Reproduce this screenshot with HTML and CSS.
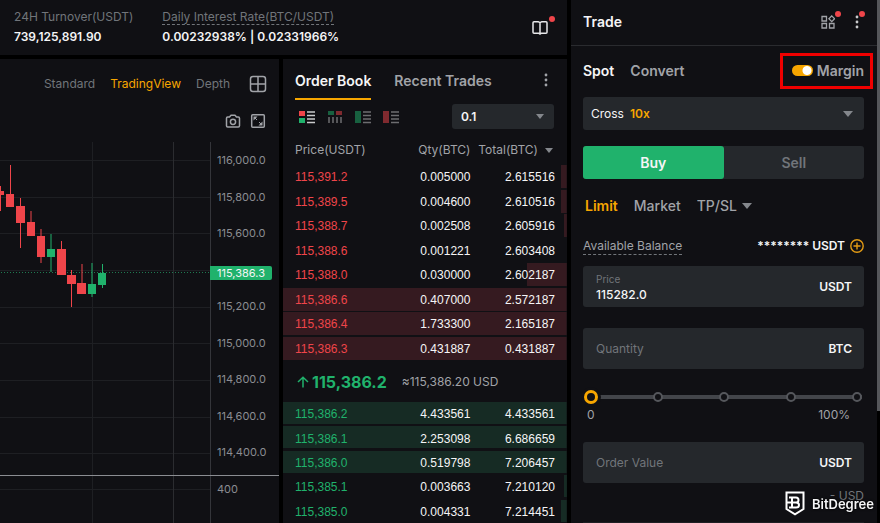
FILE: index.html
```
<!DOCTYPE html>
<html lang="en">
<head>
    <meta charset="UTF-8">
    <meta name="viewport" content="width=device-width, initial-scale=1.0">
    <title>BTC/USDT Spot Trading</title>
    <link rel="stylesheet" href="styles.css">
</head>
<body>
    <div class="app">
        <main class="market">
            <header class="ticker">
                <dl class="stat">
                    <dt>24H Turnover(USDT)</dt>
                    <dd>739,125,891.90</dd>
                </dl>
                <dl class="stat">
                    <dt><span class="hint">Daily Interest Rate(BTC/USDT)</span></dt>
                    <dd>0.00232938% | 0.02331966%</dd>
                </dl>
                <button class="icon-btn guide" aria-label="Guide">
                    <svg width="18" height="16" viewBox="0 0 18 16" fill="none" stroke="#e8e8ea" stroke-width="1.5" stroke-linejoin="round"><path d="M3 1.800H7.500L9 2.600L10.500 1.800H15Q16 1.800 16 2.800V12.200Q16 13.200 15 13.200H10.500L9 14L7.500 13.200H3Q2 13.200 2 12.200V2.800Q2 1.800 3 1.800ZM9 2.600V14"/></svg>
                    <span class="dot"></span>
                </button>
            </header>

            <section class="panel chart">
                <nav class="chart-tabs">
                    <a href="#standard">Standard</a>
                    <a href="#tradingview" class="active">TradingView</a>
                    <a href="#depth">Depth</a>
                    <button class="icon-btn" aria-label="Layout">
                        <svg width="18" height="18" viewBox="0 0 18 18" fill="none" stroke="#a1a3a8" stroke-width="1.5"><rect x="1.500" y="1.500" width="15" height="15" rx="2.500"/><path d="M9 1.500v15M1.500 9h15"/></svg>
                    </button>
                </nav>
                <div class="chart-tools">
                    <button class="icon-btn" aria-label="Take a snapshot">
                        <svg width="16" height="16" viewBox="0 0 16 16" fill="none" stroke="#a1a3a8" stroke-width="1.5" stroke-linejoin="round"><path d="M2.700 4H4.500L6 2.200H10L11.500 4H13.300Q14.500 4 14.500 5.200V12.800Q14.500 14 13.300 14H2.700Q1.500 14 1.500 12.800V5.200Q1.500 4 2.700 4Z"/><circle cx="8" cy="8.800" r="2.600"/></svg>
                    </button>
                    <button class="icon-btn" aria-label="Full screen">
                        <svg width="16" height="16" viewBox="0 0 16 16" fill="none" stroke="#a1a3a8" stroke-width="1.5"><rect x="1.700" y="1.700" width="12.600" height="12.600" rx="1"/><path d="M3.500 3.500H7.500L3.500 7.500ZM12.500 12.500V8.500L8.500 12.500Z" fill="#a1a3a8" stroke="none"/><path d="M5 5l2 2M11 11l-2-2" stroke-width="1"/></svg>
                    </button>
                </div>
                <div class="plot">
                    <div class="plot-area">
                        <svg class="candles" width="210" height="400" viewBox="0 0 210 400" aria-label="Price chart">
                            <g stroke="#1e1f23">
                                <path d="M-2000 18.500H210M-2000 55.500H210M-2000 91.500H210M-2000 128.500H210M-2000 165.500H210M-2000 201.500H210M-2000 238.500H210M-2000 275.500H210M-2000 311.500H210M-2000 347.500H210M92.500 0V400"/>
                                <path d="M173.500 0V400" stroke="#2b2c30"/>
                            </g>
                            <path d="M-2000 130.500H210" stroke="#1f7a51" stroke-dasharray="1 2"/>
                            <g stroke="#ef454a">
                                <path d="M.5 44V69M10.500 23V58M20.500 56V106M31 69V88M41 87V121M61.500 99V128M71.500 128V165M82 122V144"/>
                            </g>
                            <g fill="#ef454a">
                                <path d="M-4 49h8v4h-8zM6 52h8v13H6zM16 64h9v17h-9zM27 80h8v14h-8zM37 94h8v21h-8zM57 107h9v26h-9zM67 133h9v9h-9zM77 141h9v11h-9z"/>
                            </g>
                            <path d="M51 92V130M92 121V155M102.500 122V146" stroke="#20b26c"/>
                            <path d="M47 107h8v8h-8zM88 142h8v10h-8zM98 131h8v12h-8z" fill="#20b26c"/>
                        </svg>
                    </div>
                    <div class="axis">
                        <ol class="axis-labels">
                            <li>116,000.0</li>
                            <li>115,800.0</li>
                            <li>115,600.0</li>
                            <li></li>
                            <li>115,200.0</li>
                            <li>115,000.0</li>
                            <li>114,800.0</li>
                            <li>114,600.0</li>
                            <li>114,400.0</li>
                            <li>400</li>
                        </ol>
                        <span class="last-price" style="top: 36%">115,386.3</span>
                    </div>
                    <hr class="pane-split">
                </div>
            </section>

            <section class="panel book">
                <nav class="book-tabs">
                    <a href="#book" class="active">Order Book</a>
                    <a href="#trades">Recent Trades</a>
                    <button class="icon-btn" aria-label="More">
                        <svg width="4" height="16" viewBox="0 0 4 16" fill="#a1a3a8"><circle cx="2" cy="3" r="1.400"/><circle cx="2" cy="8" r="1.400"/><circle cx="2" cy="13" r="1.400"/></svg>
                    </button>
                </nav>
                <div class="book-tools">
                    <button class="icon-btn" aria-label="Bids and asks">
                        <svg width="16" height="14" viewBox="0 0 16 14"><path d="M0 1h6v5H0z" fill="#ef454a"/><path d="M0 8h6v5H0z" fill="#20b26c"/><path d="M8 2h8M8 5.500h8M8 9h8M8 12.500h8" stroke="#c9cacc" stroke-width="1.300"/></svg>
                    </button>
                    <button class="icon-btn faded" aria-label="Depth columns">
                        <svg width="16" height="14" viewBox="0 0 16 14"><path d="M1 1h6v4H1z" fill="#20b26c"/><path d="M9 1h6v4H9z" fill="#ef454a"/><path d="M2 7v6M6 7v6M10 7v6M14 7v6" stroke="#c9cacc" stroke-width="1.500"/></svg>
                    </button>
                    <button class="icon-btn faded" aria-label="Bids only">
                        <svg width="16" height="14" viewBox="0 0 16 14"><path d="M0 1h6v12H0z" fill="#20b26c"/><path d="M8 2h8M8 5.500h8M8 9h8M8 12.500h8" stroke="#c9cacc" stroke-width="1.300"/></svg>
                    </button>
                    <button class="icon-btn faded" aria-label="Asks only">
                        <svg width="16" height="14" viewBox="0 0 16 14"><path d="M0 1h6v12H0z" fill="#ef454a"/><path d="M8 2h8M8 5.500h8M8 9h8M8 12.500h8" stroke="#c9cacc" stroke-width="1.300"/></svg>
                    </button>
                    <div class="select precision">
                        <select aria-label="Price precision">
                            <option>0.1</option>
                            <option>1</option>
                            <option>10</option>
                        </select>
                    </div>
                </div>
                <table class="orders asks">
                    <thead>
                        <tr><th>Price(USDT)</th><th>Qty(BTC)</th><th class="sort">Total(BTC)</th></tr>
                    </thead>
                    <tbody>
                        <tr style="--depth: 2%"><td>115,391.2</td><td>0.005000</td><td>2.615516</td></tr>
                        <tr style="--depth: 2%"><td>115,389.5</td><td>0.004600</td><td>2.610516</td></tr>
                        <tr style="--depth: 1%"><td>115,388.7</td><td>0.002508</td><td>2.605916</td></tr>
                        <tr style="--depth: 0%"><td>115,388.6</td><td>0.001221</td><td>2.603408</td></tr>
                        <tr style="--depth: 14%"><td>115,388.0</td><td>0.030000</td><td>2.602187</td></tr>
                        <tr style="--depth: 100%"><td>115,386.6</td><td>0.407000</td><td>2.572187</td></tr>
                        <tr style="--depth: 100%"><td>115,386.4</td><td>1.733300</td><td>2.165187</td></tr>
                        <tr style="--depth: 100%"><td>115,386.3</td><td>0.431887</td><td>0.431887</td></tr>
                    </tbody>
                </table>
                <div class="spread">
                    <svg width="12" height="12" viewBox="0 0 12 12" fill="none" stroke="#20b26c" stroke-width="1.500"><path d="M6 11.500V1.500M1 6L6 1.200L11 6"/></svg>
                    <strong>115,386.2</strong>
                    <span>≈115,386.20 USD</span>
                </div>
                <table class="orders bids">
                    <tbody>
                        <tr style="--depth: 100%"><td>115,386.2</td><td>4.433561</td><td>4.433561</td></tr>
                        <tr style="--depth: 100%"><td>115,386.1</td><td>2.253098</td><td>6.686659</td></tr>
                        <tr style="--depth: 100%"><td>115,386.0</td><td>0.519798</td><td>7.206457</td></tr>
                        <tr style="--depth: 1%"><td>115,385.1</td><td>0.003663</td><td>7.210120</td></tr>
                        <tr style="--depth: 2%"><td>115,385.0</td><td>0.004331</td><td>7.214451</td></tr>
                    </tbody>
                </table>
            </section>
        </main>

        <aside class="panel trade">
            <header class="trade-head">
                <h2>Trade</h2>
                <button class="icon-btn" aria-label="Widgets">
                    <svg width="14" height="14" viewBox="0 0 14 14" fill="none" stroke="#a1a3a8" stroke-width="1.300"><path d="M1 1.500h4.500V6H1zM1 8.500h4.500V13H1zM8.500 8.500H13V13H8.500zM10.750 .9L13.600 3.750L10.750 6.600L7.900 3.750Z"/></svg>
                    <span class="dot"></span>
                </button>
                <button class="icon-btn" aria-label="Settings">
                    <svg width="4" height="14" viewBox="0 0 4 14" fill="#c9cacc"><circle cx="2" cy="2" r="1.400"/><circle cx="2" cy="7" r="1.400"/><circle cx="2" cy="12" r="1.400"/></svg>
                    <span class="dot"></span>
                </button>
            </header>

            <form class="ticket">
                <div class="mode">
                    <a href="#spot" class="active">Spot</a>
                    <a href="#convert">Convert</a>
                    <label class="margin-switch">
                        <input type="checkbox" checked>
                        Margin
                    </label>
                </div>

                <div class="select leverage">
                    <label for="leverage">Cross</label>
                    <select id="leverage">
                        <option>10x</option>
                        <option>5x</option>
                        <option>3x</option>
                    </select>
                </div>

                <div class="side">
                    <button type="button" class="buy">Buy</button>
                    <button type="button" class="sell">Sell</button>
                </div>

                <div class="order-type">
                    <a href="#limit" class="active">Limit</a>
                    <a href="#market">Market</a>
                    <div class="select">
                        <select aria-label="Conditional order">
                            <option>TP/SL</option>
                        </select>
                    </div>
                </div>

                <div class="balance">
                    <span class="hint">Available Balance</span>
                    <strong>******** USDT</strong>
                    <button type="button" class="icon-btn" aria-label="Deposit">
                        <svg width="14" height="14" viewBox="0 0 14 14" fill="none" stroke="#e39b15" stroke-width="1.400"><circle cx="7" cy="7" r="6.200"/><path d="M7 3.500v7M3.500 7h7"/></svg>
                    </button>
                </div>

                <div class="field">
                    <div class="entry">
                        <label for="price">Price</label>
                        <input type="text" id="price" value="115282.0">
                    </div>
                    <span class="unit">USDT</span>
                </div>
                <div class="field">
                    <input type="text" aria-label="Quantity" placeholder="Quantity">
                    <span class="unit">BTC</span>
                </div>

                <div class="slider">
                    <div class="track">
                        <div class="stops"><i></i><i></i><i></i><i></i><i></i></div>
                        <input type="range" min="0" max="100" value="0" aria-label="Percent of balance">
                    </div>
                    <div class="scale"><span>0</span><span>100%</span></div>
                </div>

                <div class="field">
                    <input type="text" aria-label="Order Value" placeholder="Order Value">
                    <span class="unit">USDT</span>
                </div>
                <p class="estimate">- USD</p>
                <hr>
            </form>
        </aside>
        <div class="scrollbar"></div>
    </div>

    <div class="watermark">
        <svg width="20" height="25" viewBox="0 0 20 25" fill="none" stroke="#fff" stroke-width="2"><path d="M1.500 1.500H18.500V18L10 23.300L1.500 18Z"/><path d="M1.500 11.500H13M7 6.500H11Q13.500 6.500 13.500 9T11 11.500Q14 11.500 14 14T11 16.500H7ZM4 6.500H7M4 16.500H7"/></svg>
        <span>BitDegree</span>
    </div>
</body>
</html>
```
FILE: styles.css
```
* {
    margin: 0;
    padding: 0;
    box-sizing: border-box;
}

:root {
    --panel: #101014;
    --field: #25282c;
    --text: #f5f5f6;
    --muted: #a1a3a8;
    --dim: #71757a;
    --accent: #f7a600;
    --green: #20b26c;
    --red: #ef454a;
}

body {
    font-family: Inter, "Liberation Sans", sans-serif;
    font-size: 12px;
    line-height: 16px;
    color: var(--text);
    background: #000;
    overflow: hidden;
}

a {
    color: inherit;
    text-decoration: none;
}

button, input, select {
    font: inherit;
    color: inherit;
    background: none;
    border: none;
    outline: none;
}

.app {
    display: grid;
    grid-template-columns: minmax(0, 1fr) 306px 3px;
    height: 100vh;
}

.panel {
    background: var(--panel);
    min-width: 0;
    overflow: hidden;
}

.market {
    display: grid;
    grid-template-columns: minmax(0, 1fr) 284px;
    grid-template-rows: 55px minmax(0, 1fr);
    gap: 4px;
    margin-right: 4px;
}

.icon-btn {
    display: inline-flex;
    position: relative;
    cursor: pointer;
}

.dot {
    position: absolute;
    top: -4px;
    right: -6px;
    width: 6px;
    height: 6px;
    border-radius: 50%;
    background: var(--red);
}

.hint {
    border-bottom: 1px dashed var(--dim);
}

/* ticker */
.ticker {
    grid-column: 1 / -1;
    display: flex;
    align-items: center;
    gap: 29px;
    padding: 0 18px 0 14px;
    background: var(--panel);
}

.stat dt {
    color: var(--dim);
    line-height: 18px;
}

.stat dd {
    font-weight: 600;
    line-height: 22px;
}

.guide {
    margin-left: auto;
}

/* chart */
.chart {
    display: flex;
    flex-direction: column;
}

.chart-tabs {
    display: flex;
    align-items: center;
    justify-content: flex-end;
    gap: 15px;
    height: 48px;
    padding: 2px 12px 0 0;
    color: var(--dim);
}

.chart-tabs .active {
    color: var(--accent);
}

.chart-tabs .icon-btn {
    margin-left: 4px;
}

.chart-tools {
    display: flex;
    justify-content: flex-end;
    gap: 9px;
    padding: 6px 13px 13px;
}

.plot {
    flex: 1;
    display: flex;
    position: relative;
    min-height: 0;
}

.plot-area {
    flex: 1;
    display: flex;
    justify-content: flex-end;
    overflow: hidden;
}

.candles {
    flex: none;
    overflow: visible;
}

.axis {
    position: relative;
    width: 69px;
    height: 365px;
}

.axis::before {
    content: "";
    position: absolute;
    top: 0;
    left: 0;
    height: 100vh;
    border-left: 1px solid #34353a;
}

.axis-labels {
    display: grid;
    grid-auto-rows: 1fr;
    align-items: center;
    height: 100%;
    padding-left: 7px;
    list-style: none;
    font-size: 11px;
    color: #8b8d92;
}

.last-price {
    position: absolute;
    left: 0;
    padding: 0 7px;
    transform: translateY(-50%);
    font-size: 11px;
    line-height: 14px;
    background: var(--green);
    border-radius: 0 2px 2px 0;
}

.pane-split {
    position: absolute;
    top: 333px;
    width: 100%;
    border: none;
    border-top: 1px solid #8b8d92;
}

/* order book */
.book-tabs {
    display: flex;
    align-items: center;
    gap: 23px;
    padding: 0 19px 0 12px;
    font-size: 14px;
    font-weight: 600;
    color: var(--muted);
}

.book-tabs a {
    line-height: 35px;
    padding-top: 4px;
    border-bottom: 2px solid transparent;
}

.book-tabs .active {
    color: var(--text);
    border-color: var(--accent);
}

.book-tabs .icon-btn {
    margin-left: auto;
}

.book-tools {
    display: flex;
    align-items: center;
    gap: 12px;
    padding: 4px 13px 0 16px;
}

.faded {
    opacity: 0.5;
}

.select {
    display: flex;
    align-items: center;
    position: relative;
}

.select select {
    flex: 1;
    appearance: none;
    padding-right: 18px;
    cursor: pointer;
}

.select::after {
    content: "";
    position: absolute;
    right: 11px;
    border: 5px solid transparent;
    border-top: 6px solid #84878c;
    border-bottom: none;
    pointer-events: none;
}

.precision {
    width: 102px;
    height: 25px;
    margin-left: auto;
    padding: 0 9px;
    font-weight: 600;
    background: var(--field);
    border-radius: 3px;
}

.precision::after {
    right: 10px;
    border-width: 5px 4px 0;
}

.orders {
    width: 100%;
    border-collapse: collapse;
    table-layout: fixed;
    font-family: "Liberation Sans", Arial, sans-serif;
}

.asks {
    height: 232px;
}

.bids {
    height: 122px;
}

.orders th {
    height: 36px;
    padding-top: 6px;
    font-family: Inter, sans-serif;
    font-weight: 400;
    text-align: right;
    color: var(--muted);
}

.orders th:first-child,
.orders td:first-child {
    width: 42%;
    padding-left: 12px;
    text-align: left;
}

.orders th:nth-child(2),
.orders td:nth-child(2) {
    width: 24%;
}

.orders td {
    text-align: right;
}

.orders td:last-child {
    padding-right: 12px;
}

.orders .sort {
    padding-right: 14px;
}

.sort::after {
    content: "";
    display: inline-block;
    margin: 0 0 1px 7px;
    border: 4px solid transparent;
    border-top: 5px solid #84878c;
    border-bottom: none;
}

.orders tbody tr {
    background: linear-gradient(var(--bar), var(--bar)) right top / var(--depth) calc(100% - 2px) no-repeat;
}

.asks {
    --bar: #351a20;
}

.asks td:first-child {
    color: var(--red);
}

.bids {
    --bar: #162b24;
}

.bids td:first-child {
    color: var(--green);
}

.spread {
    display: flex;
    align-items: center;
    gap: 3px;
    height: 41px;
    padding-left: 14px;
}

.spread strong {
    font-size: 16px;
    font-weight: 700;
    color: var(--green);
}

.spread span {
    margin-left: 12px;
    color: var(--muted);
}

/* trade ticket */
.trade-head {
    display: flex;
    align-items: center;
    gap: 20px;
    height: 46px;
    padding: 0 18px 2px 12px;
    border-bottom: 1px solid #2a2b2f;
}

.trade-head h2 {
    margin-right: auto;
    font-size: 14px;
    font-weight: 600;
}

.ticket {
    padding: 0 13px 0 12px;
}

.mode {
    display: flex;
    align-items: center;
    gap: 16px;
    height: 51px;
    padding-bottom: 2px;
    font-size: 14px;
    font-weight: 600;
    color: var(--muted);
}

.mode .active {
    color: var(--text);
}

.margin-switch {
    display: flex;
    align-items: center;
    gap: 4px;
    margin-left: auto;
    padding: 1px 0 1px 3px;
    outline: 3px solid #f00000;
    outline-offset: 6px;
}

.margin-switch input {
    appearance: none;
    width: 21px;
    height: 11px;
    border-radius: 6px;
    background: radial-gradient(circle at 15px 50%, #fff 4px, var(--accent) 5px);
    cursor: pointer;
}

.leverage {
    gap: 6px;
    height: 33px;
    padding: 0 8px;
    background: var(--field);
    border-radius: 3px;
}

.leverage select {
    font-weight: 600;
    color: var(--accent);
}

.side {
    display: flex;
    margin-top: 16px;
    background: var(--field);
    border-radius: 3px;
}

.side button {
    flex: 1;
    height: 33px;
    font-size: 14px;
    font-weight: 600;
    border-radius: 3px;
    cursor: pointer;
}

.side .buy {
    background: var(--green);
}

.side .sell {
    color: var(--dim);
}

.order-type {
    display: flex;
    align-items: center;
    gap: 16px;
    height: 54px;
    padding-left: 2px;
    font-size: 14px;
    font-weight: 500;
    color: var(--muted);
}

.order-type .active {
    font-weight: 600;
    color: var(--accent);
}

.order-type .select::after {
    right: 4px;
}

.balance {
    display: flex;
    align-items: center;
    height: 26px;
    margin-bottom: 7px;
    color: var(--muted);
}

.balance strong {
    margin: 0 5px 0 auto;
    font-weight: 600;
    color: var(--text);
}

.field {
    display: flex;
    align-items: center;
    height: 41px;
    margin-bottom: 21px;
    padding: 0 12px 0 13px;
    background: var(--field);
    border-radius: 3px;
}

.field input {
    flex: 1;
    width: 100%;
    min-width: 0;
    font-weight: 500;
}

.field input::placeholder {
    font-weight: 400;
    color: var(--dim);
}

.entry {
    flex: 1;
}

.entry label {
    display: block;
    font-size: 10px;
    color: var(--dim);
}

.unit {
    font-weight: 600;
}

.slider {
    margin-bottom: 19px;
}

.track {
    display: flex;
    position: relative;
    margin: 0 1px 3px;
}

.stops {
    position: absolute;
    inset: 0 1px 0 2px;
    display: flex;
    align-items: center;
    justify-content: space-between;
    background: linear-gradient(#43454a, #43454a) center / 100% 4px no-repeat;
}

.stops i {
    width: 10px;
    height: 10px;
    border: 2px solid #55575c;
    border-radius: 50%;
    background: var(--panel);
}

.track input {
    appearance: none;
    position: relative;
    width: 100%;
    height: 14px;
    cursor: pointer;
}

.track input::-webkit-slider-thumb {
    appearance: none;
    width: 14px;
    height: 14px;
    border: 3px solid var(--accent);
    border-radius: 50%;
    background: var(--panel);
    box-shadow: 0 0 0 3px var(--panel);
}

.scale {
    display: flex;
    justify-content: space-between;
    padding: 0 14px 0 4px;
    color: var(--muted);
}

.ticket .estimate {
    margin-top: -16px;
    text-align: right;
    color: var(--dim);
}

.ticket hr {
    margin-top: 18px;
    border: none;
    border-top: 1px solid #1e1f23;
}

.scrollbar {
    background: linear-gradient(#55565a, #55565a) top / 100% 411px no-repeat;
}

.watermark {
    position: fixed;
    right: 6px;
    bottom: 7px;
    display: flex;
    align-items: center;
    gap: 7px;
    font-size: 13px;
    font-weight: 600;
    text-shadow: 0 0 2px #000, 0 0 3px #000;
}
```
